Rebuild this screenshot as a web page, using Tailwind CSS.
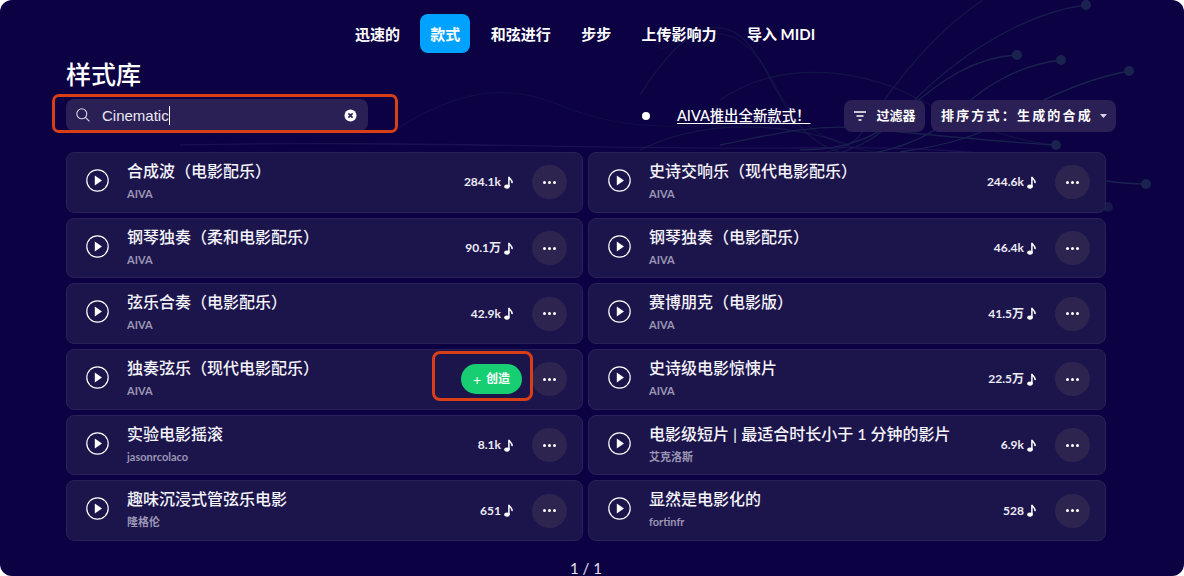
<!DOCTYPE html>
<html lang="zh">
<head>
    <meta charset="UTF-8">
    <title>样式库</title>
    <script src="https://cdn.jsdelivr.net/npm/@tailwindcss/browser@4"></script>
</head>
<body class="bg-white font-['Lato','Noto_Sans_CJK_SC',sans-serif]">
    <div class="relative w-[1184px] h-[576px] overflow-hidden rounded-[12px] bg-[#0c0142] text-white">

        <!-- background waves -->
        <svg class="absolute inset-0" width="1184" height="576" fill="none" stroke="#1a2350" stroke-width="1.3">
            <path d="M1017 55C975 57 940 80 905 112C880 135 850 150 800 150"/>
            <path d="M1061 60C1020 65 985 85 960 110C935 135 900 150 860 155"/>
            <path d="M1129 71C1090 78 1050 95 1010 118C980 135 950 145 900 152"/>
            <path d="M1086 5C1030 12 960 50 900 115C880 135 860 150 820 158" stroke-opacity=".8"/>
            <path d="M1056 145C1000 142 930 135 860 128C810 124 770 135 720 145" stroke-opacity=".9"/>
            <path d="M1106 181C1120 183 1135 184 1146 184"/>
            <path d="M983 0C930 35 890 90 860 135C850 148 830 152 810 155" stroke-opacity=".6"/>
            <path d="M640 95C690 15 730 10 760 60C785 105 800 145 850 155" stroke-opacity=".55"/>
            <path d="M660 50C720 20 745 30 775 85C795 125 830 150 900 155" stroke-opacity=".4"/>
            <path d="M720 100C770 65 840 65 900 90C950 115 1000 140 1056 145" stroke-opacity=".5"/>
            <path d="M395 130C450 95 500 80 560 105C640 140 720 120 800 125" stroke-opacity=".35"/>
            <path d="M640 150C700 120 780 120 850 145" stroke-opacity=".6"/>
            <path d="M180 145C400 140 620 150 800 148C900 146 1000 150 1100 170" stroke="#251a60" stroke-opacity=".6"/>
            <g fill="#1a2350" stroke="none">
                <circle cx="1017" cy="55" r="5"/><circle cx="1061" cy="60" r="5"/><circle cx="1129" cy="71" r="5"/>
                <circle cx="1086" cy="5" r="5"/><circle cx="1146" cy="184" r="5"/><circle cx="1056" cy="145" r="5"/>
                <circle cx="1108" cy="207" r="5" fill-opacity=".7"/>
            </g>
        </svg>

        <div class="relative pt-[14px] pl-[66px]">
            <nav class="flex justify-center gap-[10.4px] w-[1040px] ml-[-1px] text-[15px] font-bold leading-[40px] h-[39px]">
                <a class="px-[10px] rounded-[8px]">迅速的</a>
                <a class="px-[10px] rounded-[8px] bg-[#00a2ff]">款式</a>
                <a class="px-[10px] rounded-[8px]">和弦进行</a>
                <a class="px-[10px] rounded-[8px]">步步</a>
                <a class="px-[10px] rounded-[8px]">上传影响力</a>
                <a class="px-[10px] rounded-[8px]">导入 MIDI</a>
            </nav>

            <h1 class="mt-[3px] text-[25px] leading-[36px] font-medium">样式库</h1>

            <div class="mt-[8px] flex items-center w-[1090px] h-[32px]">
                <div class="relative shrink-0 mt-[-2px] w-[302px] h-[32px] flex items-center rounded-[8px] bg-[#2a2055] pl-[9px] pr-[11px]">
                    <svg width="16" height="16" viewBox="0 0 16 16" fill="none" stroke="#d8d6e4" stroke-width="1.1"><circle cx="6.8" cy="6.8" r="5"/><path d="M10.4 10.4l4 4"/></svg>
                    <span class="ml-[11px] text-[15px] font-['Liberation_Sans'] text-[#e9e7f2] border-r border-white leading-[19px]">Cinematic</span>
                    <svg class="ml-auto" width="13" height="13" viewBox="0 0 13 13"><circle cx="6.5" cy="6.5" r="6" fill="#fff"/><path d="M4.4 4.4l4.2 4.2M8.6 4.4l-4.2 4.2" stroke="#2a2055" stroke-width="1.6"/></svg>
                    <div class="absolute left-[-14px] top-[-5px] w-[346px] h-[39px] rounded-[7px] border-[3px] border-[#d83f17]"></div>
                </div>

                <span class="shrink-0 ml-[274px] w-[8px] h-[8px] rounded-full bg-white"></span>
                <a class="shrink-0 ml-[27px] text-[14.4px] font-medium underline underline-offset-2 whitespace-nowrap">AIVA推出全新款式！</a>

                <button class="shrink-0 ml-[34px] w-[81px] h-[32px] flex items-center justify-center gap-[10px] rounded-[8px] bg-[#2a2055] text-[13px] font-bold">
                    <svg width="12" height="10" viewBox="0 0 12 10" stroke="#fff" stroke-width="1.4"><path d="M0 1h12M2.5 5h7M4.5 9h3"/></svg>
                    过滤器
                </button>
                <button class="shrink-0 ml-[6px] w-[185px] h-[32px] flex items-center justify-center gap-[7px] rounded-[8px] bg-[#2a2055] text-[13px] font-bold tracking-[2.2px]">
                    排序方式：生成的合成
                    <svg width="7" height="4" viewBox="0 0 7 4"><path d="M0 0h7L3.5 4z" fill="#d8d6e4"/></svg>
                </button>
            </div>

            <div id="styles-grid" class="mt-[20px] grid grid-cols-[517px_518px] gap-x-[5px] gap-y-[5px]"></div>

            <p class="mt-[18.5px] w-[1040px] text-center text-[15px] leading-[16px] text-[#e4e2ee]">1 / 1</p>
        </div>
    </div>

    <script>
        const styles = [
            ['合成波（电影配乐）', 'AIVA', '284.1k'],
            ['史诗交响乐（现代电影配乐）', 'AIVA', '244.6k'],
            ['钢琴独奏（柔和电影配乐）', 'AIVA', '90.1万'],
            ['钢琴独奏（电影配乐）', 'AIVA', '46.4k'],
            ['弦乐合奏（电影配乐）', 'AIVA', '42.9k'],
            ['赛博朋克（电影版）', 'AIVA', '41.5万'],
            ['独奏弦乐（现代电影配乐）', 'AIVA', null],
            ['史诗级电影惊悚片', 'AIVA', '22.5万'],
            ['实验电影摇滚', 'jasonrcolaco', '8.1k'],
            ['电影级短片 | 最适合时长小于 1 分钟的影片', '艾克洛斯', '6.9k'],
            ['趣味沉浸式管弦乐电影', '隆格伦', '651'],
            ['显然是电影化的', 'fortinfr', '528'],
        ];

        const note = `<svg class="ml-[3px] mr-[19px]" width="9" height="13" viewBox="0 0 9 13"><ellipse cx="3" cy="10.6" rx="2.8" ry="2.1" fill="#fff"/><path d="M4.9 10.5V.8C5.4 3 8.6 3.6 8 7.2" fill="none" stroke="#fff" stroke-width="1.5"/></svg>`;

        const grid = document.getElementById('styles-grid');
        grid.innerHTML = styles.map(([title, author, count]) => {
            const middle = count
                ? `<span class="text-[12px] font-bold text-[#ecebf3]">${count}</span>${note}`
                : `<div class="relative mr-[10px] w-[61px] h-[30px] flex items-center justify-center gap-[5px] rounded-full bg-[#17cf72] text-[12px] font-bold">
                       <span class="font-normal text-[14px]">+</span>创造
                       <div class="absolute left-[-29px] top-[-13px] w-[101px] h-[50px] rounded-[8px] border-[3px] border-[#d83f17]"></div>
                   </div>`;
            return `<div class="h-[60.7px] flex items-center rounded-[8px] border border-[#2a2158] bg-[#1c154c] pl-[19px] pr-[15px]">
                <svg class="shrink-0 mt-[-4px]" width="23" height="23" viewBox="0 0 23 23" fill="none"><circle cx="11.5" cy="11.5" r="10.7" stroke="#fff" stroke-width="1.2"/><path d="M8.8 6.5l7.2 5-7.2 5z" fill="#fff"/></svg>
                <div class="ml-[18px] min-w-0">
                    <div class="text-[16px] leading-[20px] font-medium text-[#f4f3f9] mt-[-2px]">${title}</div>
                    <div class="mt-[5px] text-[11px] leading-[16px] font-bold text-[#9b96b4]">${author}</div>
                </div>
                <div class="ml-auto flex items-center">${middle}
                    <div class="w-[35px] h-[34px] flex items-center justify-center gap-[2px] rounded-full bg-[#2d2450]">
                        <i class="w-[3px] h-[3px] rounded-full bg-white"></i><i class="w-[3px] h-[3px] rounded-full bg-white"></i><i class="w-[3px] h-[3px] rounded-full bg-white"></i>
                    </div>
                </div>
            </div>`;
        }).join('');
    </script>
</body>
</html>
